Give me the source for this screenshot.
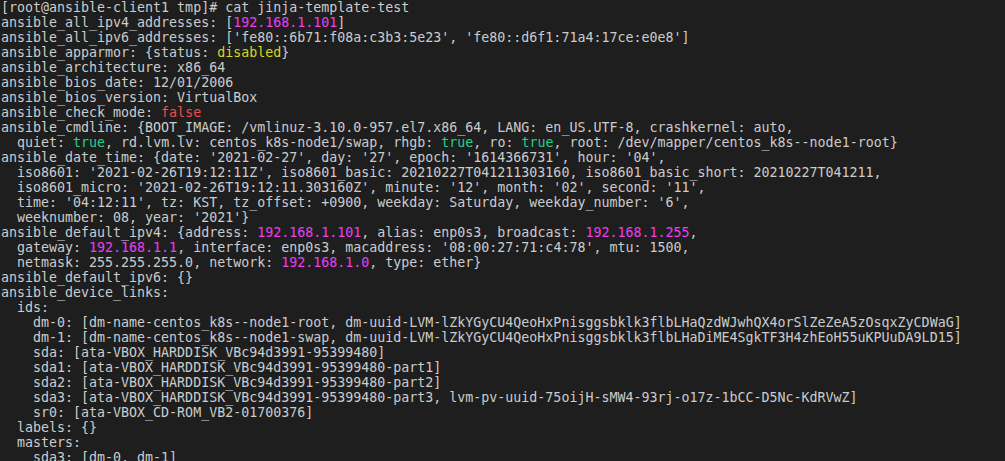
import React from 'react';

type Seg = string | [string, string];

const M = 'text-[#f03cf0]';
const Y = 'text-[#d6d61c]';
const R = 'text-[#f14c4c]';
const G = 'text-[#23d18b]';

const lines: Seg[][] = [
  ['[root@ansible-client1 tmp]# cat jinja-template-test'],
  ['ansible_all_ipv4_addresses: [', ['192.168.1.101', M], ']'],
  ["ansible_all_ipv6_addresses: ['fe80::6b71:f08a:c3b3:5e23', 'fe80::d6f1:71a4:17ce:e0e8']"],
  ['ansible_apparmor: {status: ', ['disabled', Y], '}'],
  ['ansible_architecture: x86_64'],
  ['ansible_bios_date: 12/01/2006'],
  ['ansible_bios_version: VirtualBox'],
  ['ansible_check_mode: ', ['false', R]],
  ['ansible_cmdline: {BOOT_IMAGE: /vmlinuz-3.10.0-957.el7.x86_64, LANG: en_US.UTF-8, crashkernel: auto,'],
  ['  quiet: ', ['true', G], ', rd.lvm.lv: centos_k8s-node1/swap, rhgb: ', ['true', G], ', ro: ', ['true', G], ', root: /dev/mapper/centos_k8s--node1-root}'],
  ["ansible_date_time: {date: '2021-02-27', day: '27', epoch: '1614366731', hour: '04',"],
  ["  iso8601: '2021-02-26T19:12:11Z', iso8601_basic: 20210227T041211303160, iso8601_basic_short: 20210227T041211,"],
  ["  iso8601_micro: '2021-02-26T19:12:11.303160Z', minute: '12', month: '02', second: '11',"],
  ["  time: '04:12:11', tz: KST, tz_offset: +0900, weekday: Saturday, weekday_number: '6',"],
  ["  weeknumber: 08, year: '2021'}"],
  ['ansible_default_ipv4: {address: ', ['192.168.1.101', M], ', alias: enp0s3, broadcast: ', ['192.168.1.255', M], ','],
  ['  gateway: ', ['192.168.1.1', M], ", interface: enp0s3, macaddress: '08:00:27:71:c4:78', mtu: 1500,"],
  ['  netmask: 255.255.255.0, network: ', ['192.168.1.0', M], ', type: ether}'],
  ['ansible_default_ipv6: {}'],
  ['ansible_device_links:'],
  ['  ids:'],
  ['    dm-0: [dm-name-centos_k8s--node1-root, dm-uuid-LVM-lZkYGyCU4QeoHxPnisggsbklk3flbLHaQzdWJwhQX4orSlZeZeA5zOsqxZyCDWaG]'],
  ['    dm-1: [dm-name-centos_k8s--node1-swap, dm-uuid-LVM-lZkYGyCU4QeoHxPnisggsbklk3flbLHaDiME4SgkTF3H4zhEoH55uKPUuDA9LD15]'],
  ['    sda: [ata-VBOX_HARDDISK_VBc94d3991-95399480]'],
  ['    sda1: [ata-VBOX_HARDDISK_VBc94d3991-95399480-part1]'],
  ['    sda2: [ata-VBOX_HARDDISK_VBc94d3991-95399480-part2]'],
  ['    sda3: [ata-VBOX_HARDDISK_VBc94d3991-95399480-part3, lvm-pv-uuid-75oijH-sMW4-93rj-o17z-1bCC-D5Nc-KdRVwZ]'],
  ['    sr0: [ata-VBOX_CD-ROM_VB2-01700376]'],
  ['  labels: {}'],
  ['  masters:'],
  ['    sda3: [dm-0, dm-1]'],
];

export default function App() {
  return (
    <div className="w-[1005px] h-[461px] overflow-hidden bg-[#1e1e1e] pl-px">
      <pre className="font-['DejaVu_Sans_Mono',monospace] text-[13.3px] leading-[15px] text-[#cccccc] whitespace-pre">
        {lines.map((line, i) => (
          <div key={i}>
            {line.map((seg, j) =>
              typeof seg === 'string' ? (
                <span key={j}>{seg}</span>
              ) : (
                <span key={j} className={seg[1]}>{seg[0]}</span>
              )
            )}
          </div>
        ))}
      </pre>
    </div>
  );
}
